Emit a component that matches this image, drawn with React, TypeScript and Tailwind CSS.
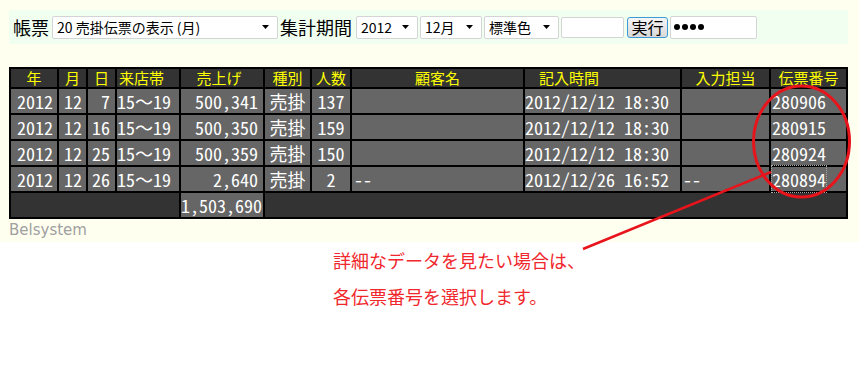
import React from "react";

const rows = [
  { d: "7", sales: "500,341", n: "137", cust: "", time: "2012/12/12 18:30", staff: "", no: "280906" },
  { d: "16", sales: "500,350", n: "159", cust: "", time: "2012/12/12 18:30", staff: "", no: "280915" },
  { d: "25", sales: "500,359", n: "150", cust: "", time: "2012/12/12 18:30", staff: "", no: "280924" },
  { d: "26", sales: "2,640", n: "2", cust: "--", time: "2012/12/26 16:52", staff: "--", no: "280894", focus: true },
];

const Arrow = () => (
  <svg width="7" height="4" viewBox="0 0 7 4" className="shrink-0">
    <path d="M0 0h7L3.5 4z" fill="#000" />
  </svg>
);

const SelectBox = ({ text, className }: { text: string; className: string }) => (
  <div
    className={`flex h-[23px] items-center justify-between rounded-[2px] border border-[#d4d4d8] bg-white pl-[4px] pr-[8px] text-[14px] text-black ${className}`}
  >
    <span className="whitespace-nowrap">{text}</span>
    <Arrow />
  </div>
);

const th = "h-[18px] p-0 bg-[#333333] text-[15px] font-normal leading-[18px] text-[#ffff00]";
const td = "h-[24px] p-0 bg-[#666666] text-[18px] leading-[24px] text-white whitespace-nowrap";

const App = () => {
  return (
    <div className="relative h-[366px] w-[859px] overflow-hidden bg-white font-['Noto_Sans_CJK_JP',sans-serif]">
      <div className="bg-[#fffff0] px-[9px] pt-[10px]">
        {/* toolbar */}
        <div className="flex h-[34px] w-[839px] items-center bg-[#f0fff0] pl-[4px]">
          <span className="mr-[3px] text-[18px] leading-none text-black">帳票</span>
          <SelectBox text="20 売掛伝票の表示 (月)" className="w-[226px]" />
          <span className="mx-[2px] text-[18px] leading-none text-black">集計期間</span>
          <SelectBox text="2012" className="ml-[2px] w-[62px]" />
          <SelectBox text="12月" className="ml-[2px] w-[62px]" />
          <SelectBox text="標準色" className="ml-[2px] w-[75px]" />
          <div className="ml-[2px] h-[21px] w-[63px] rounded-[2px] border border-[#d4d4d8] bg-white" />
          <button className="ml-[3px] flex h-[21px] w-[41px] items-center justify-center rounded-[3px] border border-[#3c9bd6] bg-gradient-to-b from-[#f6f6f6] to-[#d8d8d8] text-[16px] leading-none text-black">
            実行
          </button>
          <div className="ml-[2px] flex h-[23px] w-[87px] items-center gap-[2px] rounded-[2px] border border-[#d4d4d8] bg-white pl-[3px]">
            {[0, 1, 2, 3].map((i) => (
              <span key={i} className="h-[6px] w-[6px] rounded-full bg-black" />
            ))}
          </div>
        </div>

        {/* report table */}
        <table className="mt-[23px] w-[839px] table-fixed border-separate border-spacing-[2px] bg-black font-['Noto_Sans_Mono_CJK_JP','Noto_Sans_CJK_JP',monospace]">
          <colgroup>
            <col className="w-[46px]" />
            <col className="w-[27px]" />
            <col className="w-[27px]" />
            <col className="w-[62px]" />
            <col className="w-[82px]" />
            <col className="w-[45px]" />
            <col className="w-[38px]" />
            <col className="w-[171px]" />
            <col className="w-[155px]" />
            <col className="w-[87px]" />
            <col className="w-[75px]" />
          </colgroup>
          <thead>
            <tr>
              <th className={`${th} text-center`}>年</th>
              <th className={`${th} text-center`}>月</th>
              <th className={`${th} text-center`}>日</th>
              <th className={`${th} pl-[2px] text-left`}>来店帯</th>
              <th className={`${th} pr-[6px] text-center`}>売上げ</th>
              <th className={`${th} text-center`}>種別</th>
              <th className={`${th} text-center`}>人数</th>
              <th className={`${th} text-center`}>顧客名</th>
              <th className={`${th} pl-[14px] text-left`}>記入時間</th>
              <th className={`${th} text-center`}>入力担当</th>
              <th className={`${th} text-center`}>伝票番号</th>
            </tr>
          </thead>
          <tbody>
            {rows.map((r) => (
              <tr key={r.no}>
                <td className={`${td} pr-[4px] text-right`}>2012</td>
                <td className={`${td} pr-[4px] text-right`}>12</td>
                <td className={`${td} pr-[5px] text-right`}>{r.d}</td>
                <td className={`${td} text-left`}>15〜19</td>
                <td className={`${td} pr-[5px] text-right`}>{r.sales}</td>
                <td className={`${td} text-center`}>売掛</td>
                <td className={`${td} text-center`}>{r.n}</td>
                <td className={`${td} pl-[2px] text-left`}>{r.cust}</td>
                <td className={`${td} text-left`}>{r.time}</td>
                <td className={`${td} pl-[1px] text-left`}>{r.staff}</td>
                <td className={`${td} pl-[1px] text-left`}>
                  {r.focus ? (
                    <span className="outline-1 outline-dotted outline-[#aaaaaa]">{r.no}</span>
                  ) : (
                    r.no
                  )}
                </td>
              </tr>
            ))}
            <tr>
              <td colSpan={4} className="h-[24px] bg-[#333333] p-0" />
              <td className={`${td} text-left`}>1,503,690</td>
              <td colSpan={6} className="h-[24px] bg-[#333333] p-0" />
            </tr>
          </tbody>
        </table>

        <div className="h-[23px] font-['DejaVu_Sans',sans-serif] text-[15px] leading-[22px] text-[#a0a0a0]">
          Belsystem
        </div>
      </div>

      {/* annotation */}
      <div className="pl-[333px] text-[18px] leading-[36px] text-[#f0282d]">
        <p>詳細なデータを見たい場合は、</p>
        <p>各伝票番号を選択します。</p>
      </div>

      <svg className="pointer-events-none absolute inset-0" width="859" height="366">
        <ellipse cx="801.5" cy="141.5" rx="48" ry="55.5" fill="none" stroke="#e8141c" strokeWidth="3" />
        <line x1="583" y1="249" x2="771" y2="172" stroke="#e8141c" strokeWidth="2.5" />
      </svg>
    </div>
  );
};

export default App;
